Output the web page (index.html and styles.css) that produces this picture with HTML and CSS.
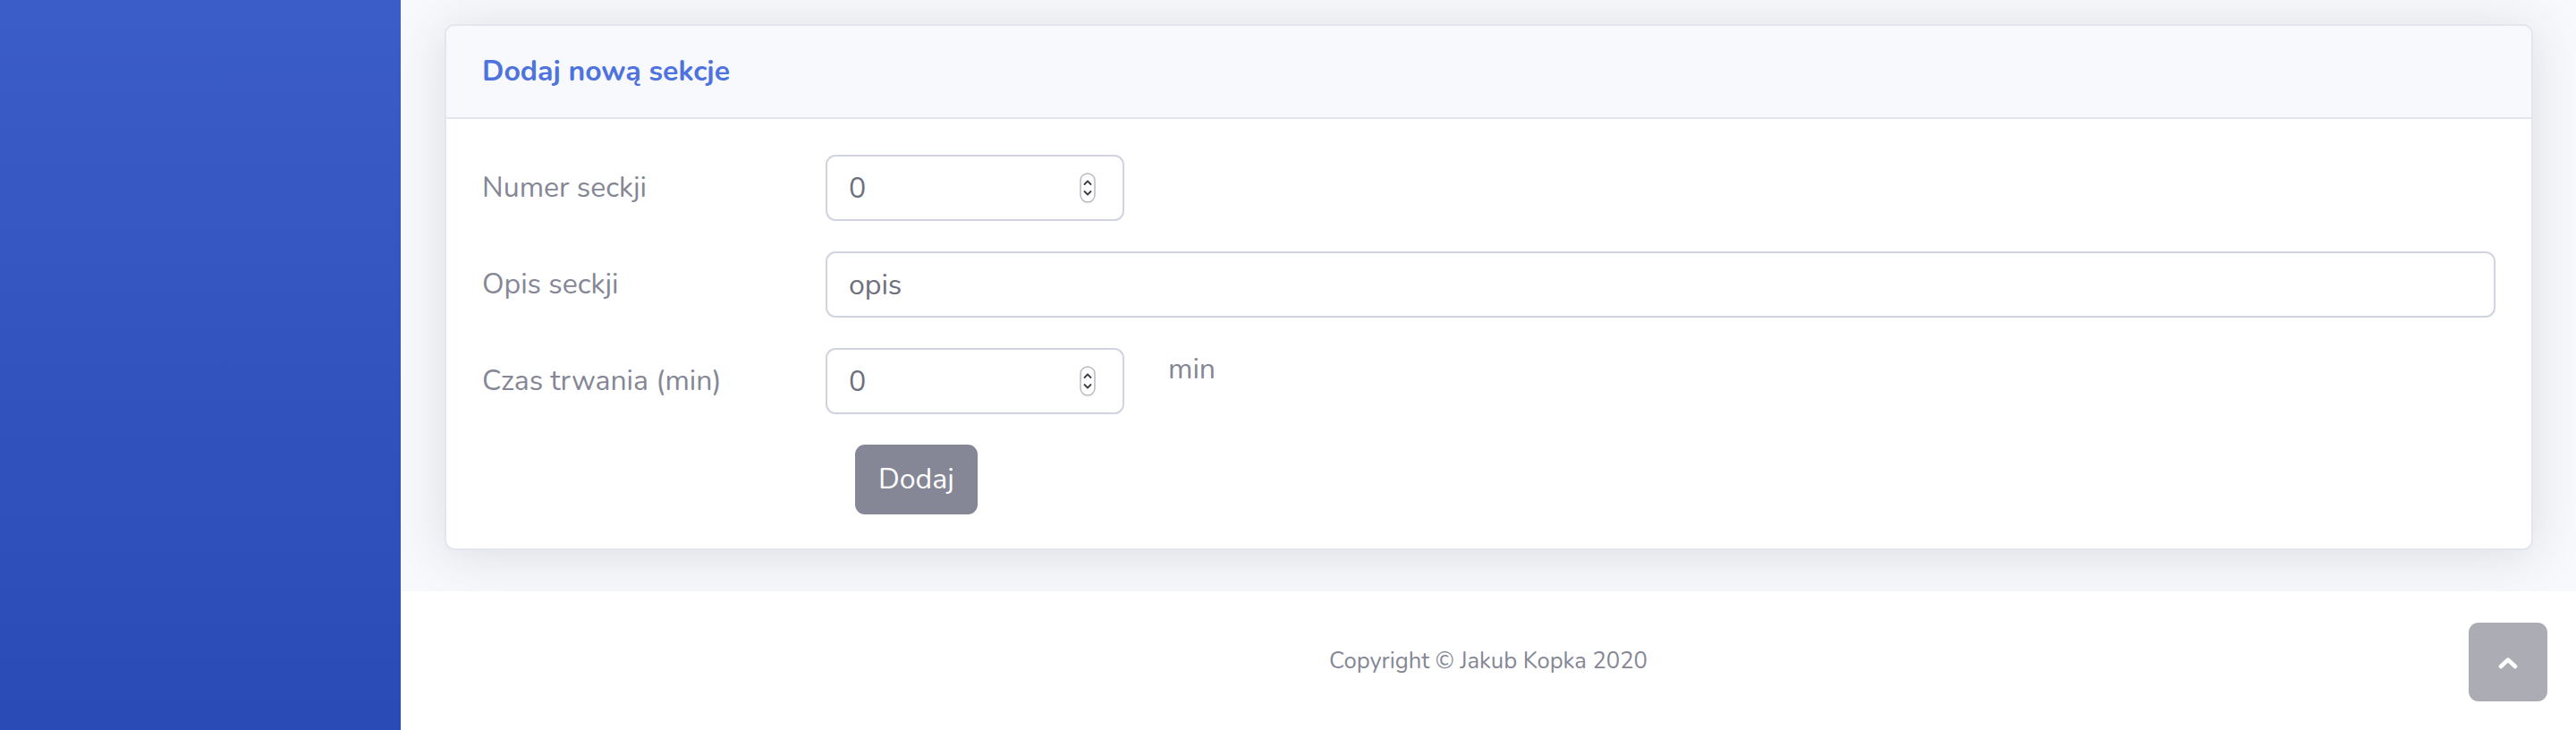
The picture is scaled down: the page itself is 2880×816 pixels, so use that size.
FILE: index.html
```html
<!DOCTYPE html>
<html lang="pl">
<head>
<meta charset="utf-8">
<title>Dodaj nową sekcje</title>
<link rel="stylesheet" href="styles.css">
</head>
<body>
<div class="layout">
  <aside class="sidebar"></aside>
  <div class="main">
    <div class="content">
      <div class="card">
        <div class="card-header"><h6 class="card-title">Dodaj nową sekcje</h6></div>
        <div class="card-body">
          <form class="form">
            <div class="form-row">
              <label class="col-label" for="nr">Numer seckji</label>
              <div class="field field-small">
                <input id="nr" class="form-control" type="number" value="0">
                <span class="spin"><svg width="18" height="34" viewBox="0 0 18 34"><rect x="1" y="1" width="16" height="32" rx="8" fill="#fff" stroke="#b9bac4" stroke-width="1.5"/><path d="M5.5 13 L9 9.5 L12.5 13" fill="none" stroke="#3a3b45" stroke-width="1.8" stroke-linecap="round" stroke-linejoin="round"/><path d="M5.5 21 L9 24.5 L12.5 21" fill="none" stroke="#3a3b45" stroke-width="1.8" stroke-linecap="round" stroke-linejoin="round"/></svg></span>
              </div>
            </div>
            <div class="form-row">
              <label class="col-label" for="opis">Opis seckji</label>
              <div class="field field-wide">
                <input id="opis" class="form-control" type="text" value="opis">
              </div>
            </div>
            <div class="form-row">
              <label class="col-label" for="czas">Czas trwania (min)</label>
              <div class="field field-small">
                <input id="czas" class="form-control" type="number" value="0">
                <span class="spin"><svg width="18" height="34" viewBox="0 0 18 34"><rect x="1" y="1" width="16" height="32" rx="8" fill="#fff" stroke="#b9bac4" stroke-width="1.5"/><path d="M5.5 13 L9 9.5 L12.5 13" fill="none" stroke="#3a3b45" stroke-width="1.8" stroke-linecap="round" stroke-linejoin="round"/><path d="M5.5 21 L9 24.5 L12.5 21" fill="none" stroke="#3a3b45" stroke-width="1.8" stroke-linecap="round" stroke-linejoin="round"/></svg></span>
              </div>
              <div class="unit">min</div>
            </div>
            <div class="actions">
              <button type="button" class="btn">Dodaj</button>
            </div>
          </form>
        </div>
      </div>
    </div>
    <footer class="footer">
      <span class="copyright">Copyright © Jakub Kopka 2020</span>
    </footer>
  </div>
  <a class="scroll-top" href="#"><svg width="22" height="14" viewBox="0 0 22 14"><path d="M3 11 L11 3.5 L19 11" fill="none" stroke="#fff" stroke-width="4.5" stroke-linecap="round" stroke-linejoin="round"/></svg></a>
</div>
</body>
</html>
```

FILE: styles.css
```css
html, body {
  margin: 0;
  padding: 0;
}
body {
  font-family: "Nunito", "Lato", "Noto Sans", sans-serif;
  color: #858796;
  background: #fff;
}
.layout {
  display: flex;
  height: 816px;
  overflow: hidden;
}
.sidebar {
  width: 448px;
  flex: none;
  background: linear-gradient(180deg, #3b5dc7 0%, #2a4ab5 100%);
}
.main {
  flex: 1;
  display: flex;
  flex-direction: column;
  min-width: 0;
}
.content {
  flex: 1;
  background: #f8f9fc;
  padding: 27px 48px 0 49px;
}
.card {
  background: #fff;
  border: 2px solid #e3e6f0;
  border-radius: 11px;
  box-shadow: 0 5px 56px 0 rgba(58, 59, 69, 0.15);
  overflow: hidden;
}
.card-header {
  background: #f8f9fc;
  border-bottom: 2px solid #e3e6f0;
  padding: 32px 40px;
}
.card-title {
  margin: 0;
  font-size: 32px;
  line-height: 38px;
  font-weight: 700;
  color: #4e73df;
}
.card-body {
  padding: 40px 40px 38px;
}
.form-row {
  display: flex;
  align-items: flex-start;
  margin-bottom: 34px;
}
.col-label {
  width: 384px;
  flex: none;
  font-size: 32px;
  line-height: 48px;
  padding-top: 13px;
  color: #858796;
}
.field {
  position: relative;
}
.field-small {
  width: 334px;
  flex: none;
}
.field-wide {
  flex: 1;
}
.form-control {
  box-sizing: border-box;
  display: block;
  width: 100%;
  height: 74px;
  padding: 12px 24px;
  font-family: inherit;
  font-size: 32px;
  line-height: 48px;
  color: #6e707e;
  background: #fff;
  border: 2px solid #d1d3e2;
  border-radius: 11px;
  outline: none;
  -moz-appearance: textfield;
}
.form-control::-webkit-inner-spin-button,
.form-control::-webkit-outer-spin-button {
  -webkit-appearance: none;
  margin: 0;
}
.spin {
  position: absolute;
  right: 32px;
  top: 20px;
  width: 18px;
  height: 34px;
  display: block;
}
.spin svg {
  display: block;
}
.unit {
  margin-left: 49px;
  font-size: 32px;
  line-height: 48px;
  color: #858796;
}
.actions {
  padding-left: 417px;
}
.btn {
  font-family: inherit;
  font-size: 32px;
  line-height: 48px;
  padding: 13px 24px;
  color: #fff;
  background: #858796;
  border: 2px solid #858796;
  border-radius: 11px;
  cursor: pointer;
}
.footer {
  height: 155px;
  flex: none;
  background: #fff;
  display: flex;
  align-items: center;
  justify-content: center;
}
.copyright {
  font-size: 25.6px;
  line-height: 1;
  color: #858796;
}
.scroll-top {
  position: fixed;
  right: 32px;
  bottom: 32px;
  width: 88px;
  height: 88px;
  border-radius: 11px;
  background: rgba(90, 92, 105, 0.5);
  display: flex;
  align-items: center;
  justify-content: center;
}
.scroll-top svg {
  display: block;
  margin-top: 2px;
}
```
